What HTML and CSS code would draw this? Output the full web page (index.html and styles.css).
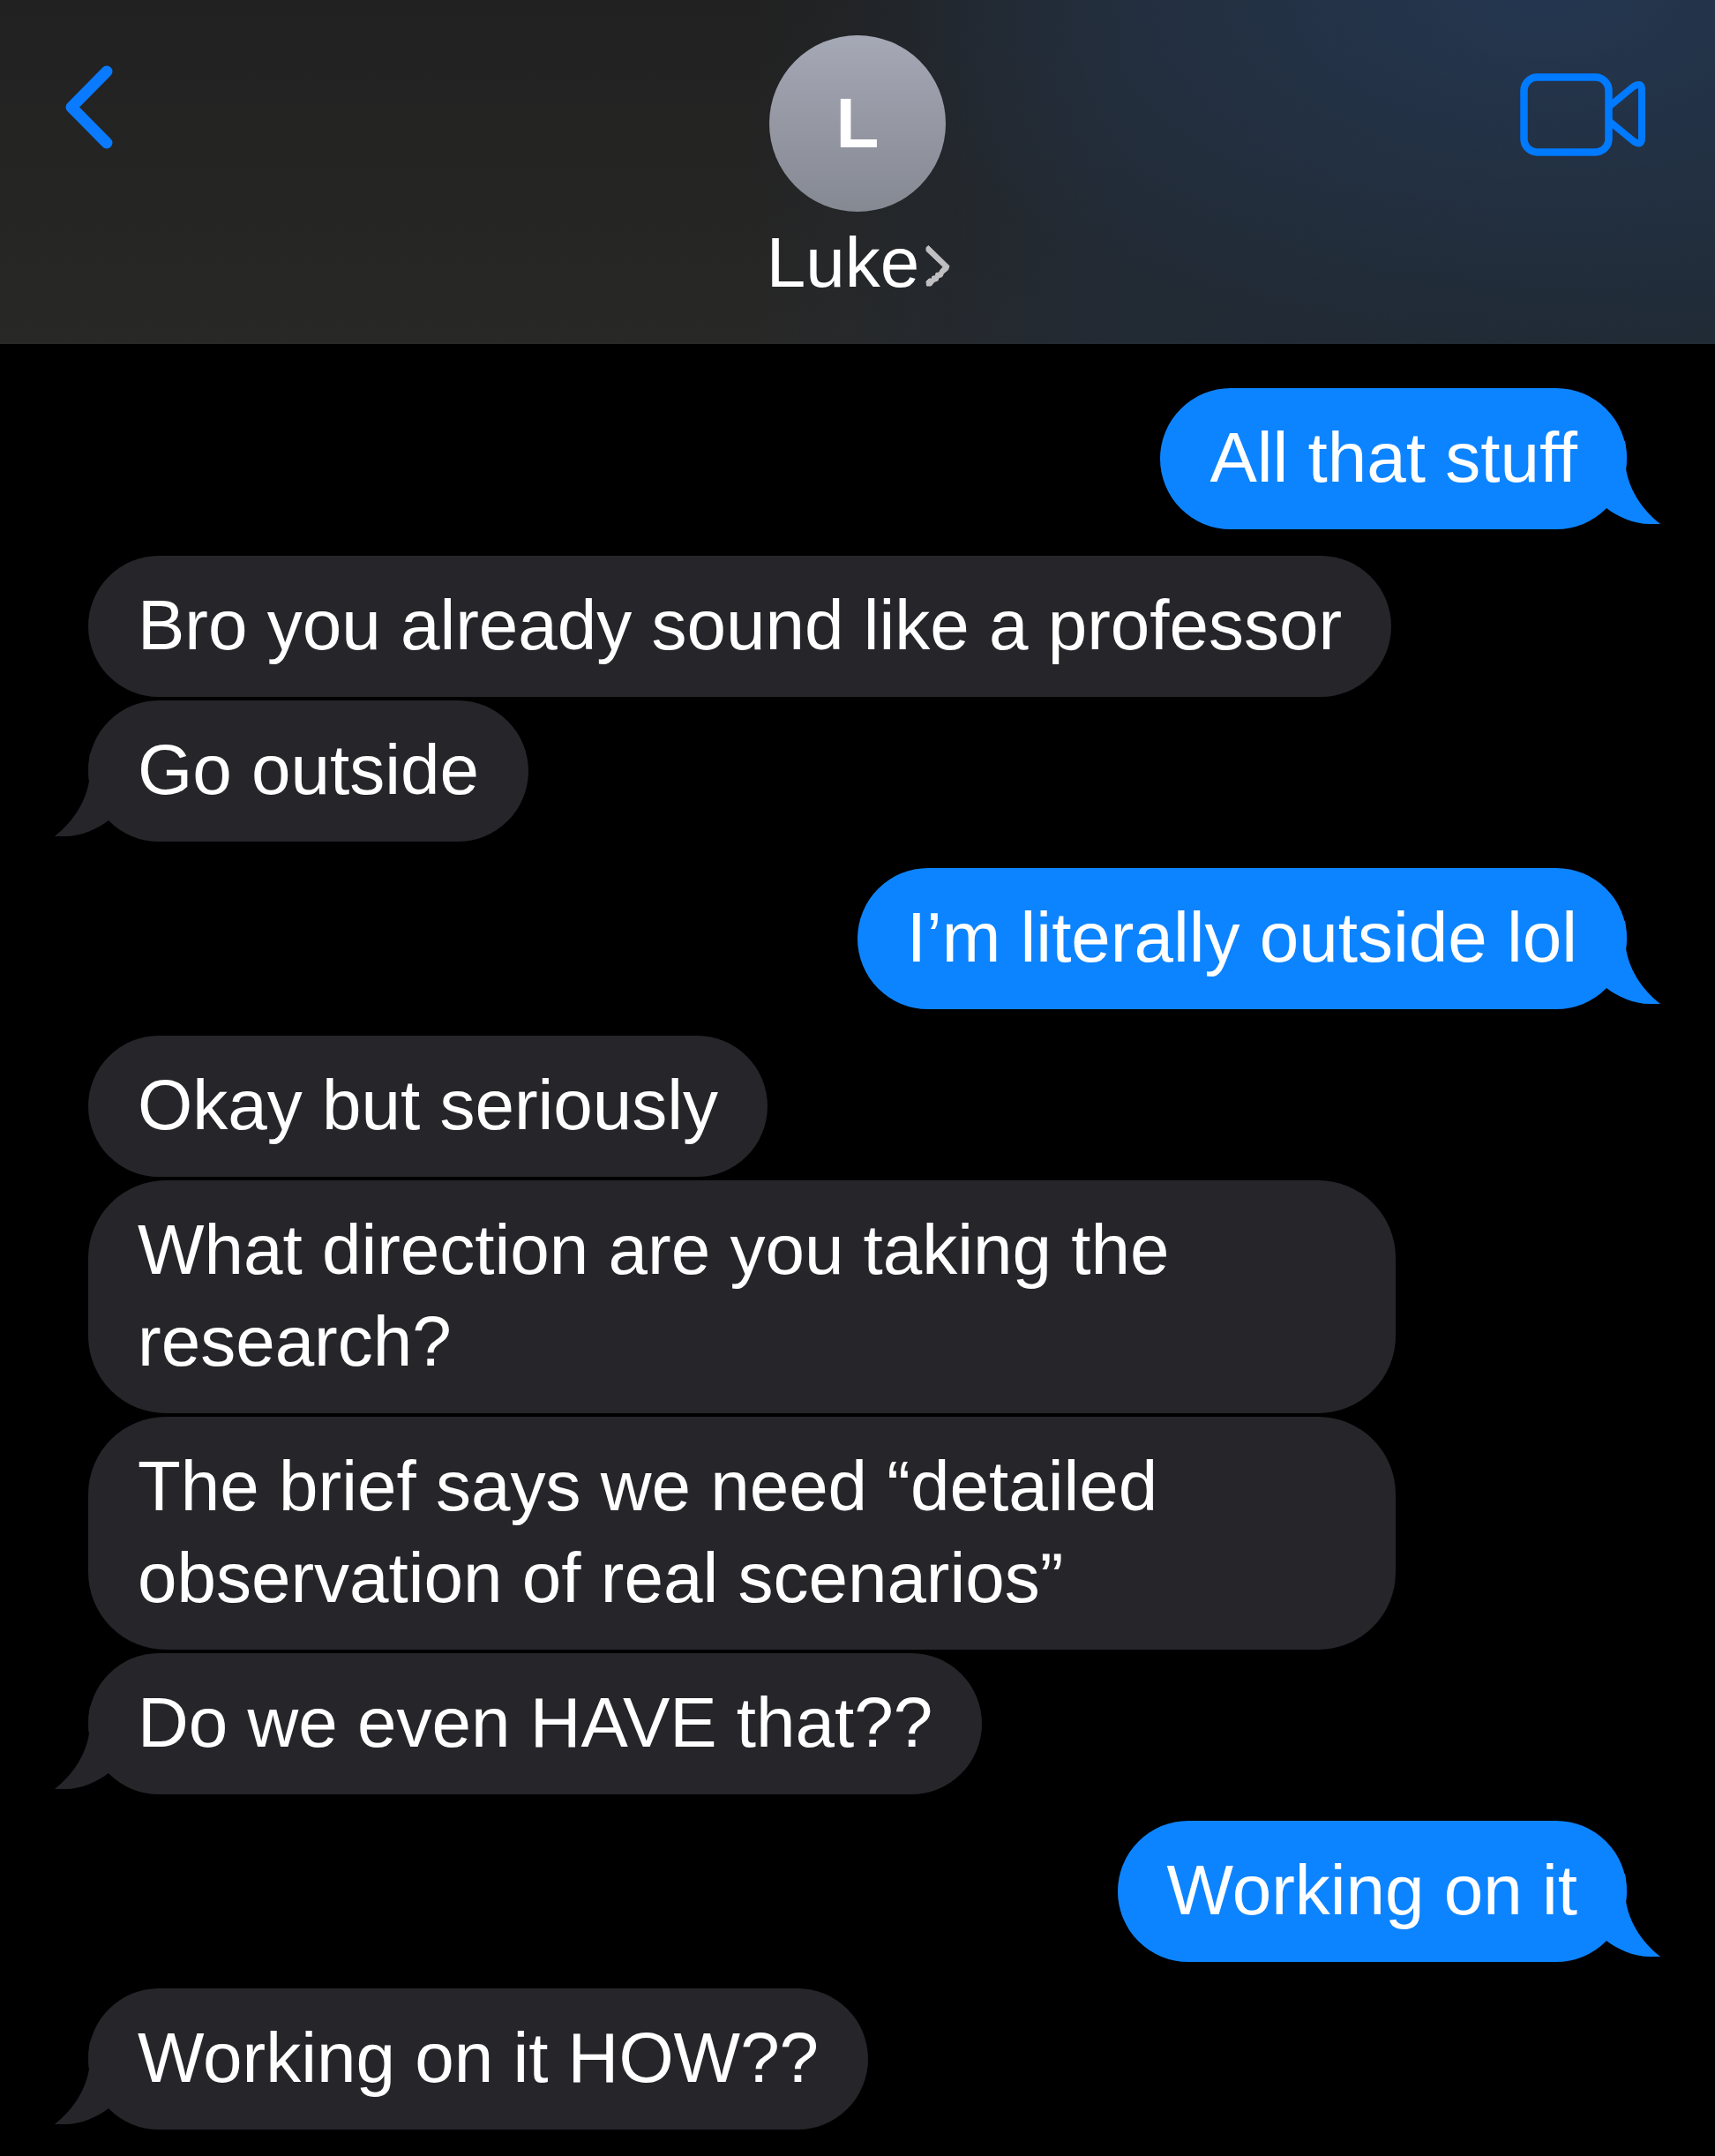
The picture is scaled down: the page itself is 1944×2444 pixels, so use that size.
FILE: index.html
```html
<!DOCTYPE html>
<html lang="en">
<head>
<meta charset="utf-8">
<meta name="viewport" content="width=device-width, initial-scale=1">
<title>Luke</title>
<link rel="stylesheet" href="styles.css">
</head>
<body>
<header class="chat-header">
  <button class="icon-button back" type="button" aria-label="Back">
    <svg width="56" height="96" viewBox="0 0 56 96" fill="none" stroke="#0a7aff" stroke-width="13" stroke-linecap="round" stroke-linejoin="round"><path d="M47 7 7 47.500 47 88"/></svg>
  </button>
  <button class="contact" type="button">
    <span class="avatar">L</span>
    <span class="contact-name">Luke
      <svg width="33" height="48" viewBox="0 0 33 48" fill="#c0c0c3" stroke="#c0c0c3"><path d="M8 6.500 10.500 4.500 34 27.500 32.500 32 27.500 36 26 39.500 22 41 21 44 17 45.500 13.500 50 8.500 50 8 45 11 42 14 42 15 39 18 39 19 35.500 22.500 35 24 32 27 28.500 8 10.500Z"/></svg>
    </span>
  </button>
  <button class="icon-button video" type="button" aria-label="Video call">
    <svg width="148" height="96" viewBox="0 0 148 96" fill="none" stroke="#007aff" stroke-linejoin="round"><rect x="5.500" y="5.500" width="96" height="85" rx="15" stroke-width="8.500"/><path d="M103 38 129 16.500Q139 10 139 20V74Q139 85 129 77.500L103 56" stroke-width="8"/></svg>
  </button>
</header>
<main>
  <ol class="messages">
    <li class="bubble sent tail">All that stuff</li>
    <li class="bubble received first">Bro you already sound like a professor</li>
    <li class="bubble received tail">Go outside</li>
    <li class="bubble sent first tail">I’m literally outside lol</li>
    <li class="bubble received first">Okay but seriously</li>
    <li class="bubble received">What direction are you taking the research?</li>
    <li class="bubble received">The brief says we need “detailed observation of real scenarios”</li>
    <li class="bubble received tail">Do we even HAVE that??</li>
    <li class="bubble sent first tail">Working on it</li>
    <li class="bubble received first tail">Working on it HOW??</li>
  </ol>
</main>
</body>
</html>
```
FILE: styles.css
```css
* {
  box-sizing: border-box;
}

body {
  margin: 0;
  background: #000;
  color: #fff;
  font-family: "Liberation Sans", Arial, sans-serif;
  font-size: 80px;
  line-height: 104px;
}

button {
  padding: 0;
  border: 0;
  background: none;
  color: inherit;
  font: inherit;
  cursor: pointer;
}

svg {
  display: block;
}

.chat-header {
  display: grid;
  grid-template-columns: 1fr auto 1fr;
  align-items: start;
  padding: 40px 74px;
  background:
    radial-gradient(ellipse 40% 100% at 90% 0%, #253956cc, #25395600),
    linear-gradient(to right, #222b3500 44%, #222a34 66%, #202b36),
    linear-gradient(#212121, #282827);
}

.icon-button {
  margin-top: 34px;
}

.back {
  justify-self: start;
}

.video {
  justify-self: end;
  margin-top: 42px;
}

.contact {
  display: flex;
  flex-direction: column;
  align-items: center;
  gap: 6px;
}

.avatar {
  display: flex;
  align-items: center;
  justify-content: center;
  width: 200px;
  height: 200px;
  border-radius: 50%;
  background: linear-gradient(#a5a8b5, #858992);
  font-weight: bold;
}

.contact-name {
  display: flex;
  align-items: center;
}

.contact-name svg {
  overflow: visible;
}

.messages {
  display: flex;
  flex-direction: column;
  align-items: flex-start;
  gap: 4px;
  margin: 0;
  padding: 50px 100px 30px;
  list-style: none;
}

.bubble {
  position: relative;
  max-width: 85%;
  padding: 27px 56px 29px;
  border-radius: 88px;
}

.sent {
  align-self: flex-end;
  background: #0d84ff;
}

.received {
  background: #26252a;
}

/* wider gap where the speaker changes */
.first {
  margin-top: 26px;
}

.tail::after {
  content: "";
  position: absolute;
  right: -38px;
  bottom: 6px;
  width: 72px;
  height: 94px;
  background: inherit;
  clip-path: path("M0 0H32C34 10 34 20 33 31C36 52 49 76 72 94H60C42 94 24 86 11 76L0 70Z");
}

.received.tail::after {
  right: auto;
  left: -38px;
  transform: scaleX(-1);
}
```
